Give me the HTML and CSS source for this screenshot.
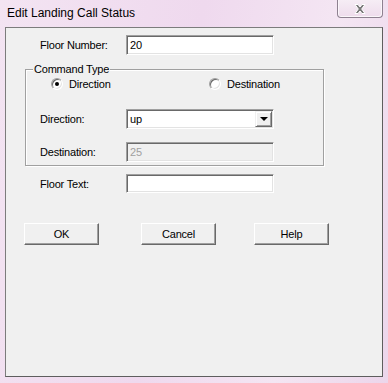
FILE: index.html
```html
<!DOCTYPE html>
<html lang="en">
<head>
  <meta charset="UTF-8">
  <title>Edit Landing Call Status</title>
  <link rel="stylesheet" href="styles.css">
</head>
<body>
<div class="window">
  <div class="titlebar">
    <span class="title">Edit Landing Call Status</span>
    <div class="close">
      <svg width="14" height="12" viewBox="0 0 14 12">
        <path d="M2 1.5 L5 1.5 L7 4 L9 1.5 L12 1.5 L8.7 6 L12 10.5 L9 10.5 L7 8 L5 10.5 L2 10.5 L5.3 6 Z" fill="#7a7a7a" stroke="#fff" stroke-width="1"/>
      </svg>
    </div>
  </div>
  <div class="client">
    <div class="row first">
      <label>Floor Number:</label>
      <div class="edit">20</div>
    </div>

    <div class="group">
      <span class="group-title">Command Type</span>
      <div class="radios">
        <span class="radio first-radio"><i class="dot checked"></i>Direction</span>
        <span class="radio"><i class="dot"></i>Destination</span>
      </div>
      <div class="row row-dir">
        <label>Direction:</label>
        <div class="edit combo">up<span class="drop"><i></i></span></div>
      </div>
      <div class="row row-dest">
        <label>Destination:</label>
        <div class="edit disabled">25</div>
      </div>
    </div>

    <div class="row row-text">
      <label>Floor Text:</label>
      <div class="edit short"></div>
    </div>

    <div class="buttons">
      <button class="btn btn-ok">OK</button>
      <button class="btn btn-cancel">Cancel</button>
      <button class="btn btn-help">Help</button>
    </div>
  </div>
</div>
</body>
</html>
```

FILE: styles.css
```css
* {
  padding: 0;
  margin: 0;
  box-sizing: border-box;
}

body {
  font-family: "Liberation Sans", Arial, sans-serif;
  font-size: 11px;
  color: #000;
}

.window {
  width: 388px;
  height: 383px;
  background: linear-gradient(100deg, #f3e4f2 0%, #efd9ee 45%, #f4e6f3 75%, #ecd6eb 100%);
}

.titlebar {
  height: 27px;
  display: flex;
  justify-content: space-between;
  align-items: flex-start;
}

.title {
  padding: 6px 0 0 7px;
  font-size: 12px;
  line-height: 15px;
  color: #000;
}

.close {
  width: 46px;
  height: 18px;
  margin-right: 5px;
  border: 1px solid #8e8190;
  border-top: 0;
  border-radius: 0 0 4px 4px;
  background: linear-gradient(#f6edf5, #eedcec);
  box-shadow: inset 1px 0 #fbf6fa, inset -1px -1px #fbf6fa;
  display: flex;
  align-items: center;
  justify-content: center;
}

.client {
  margin-left: 5px;
  width: 378px;
  height: 350px;
  background: #f0f0f0;
  border: 1px solid #7c7c7c;
  border-right-color: #5e5e5e;
  border-bottom-color: #5e5e5e;
}

.row {
  display: flex;
  align-items: center;
  padding-left: 34px;
}

.row label {
  width: 86px;
  letter-spacing: -0.2px;
}

.row.first {
  margin-top: 7px;
}

.edit {
  width: 148px;
  height: 20px;
  background: #fff;
  border: 1px solid;
  border-color: #a0a0a0 #fff #fff #a0a0a0;
  box-shadow: inset 1px 1px #696969, inset -1px -1px #e3e3e3;
  padding: 0 2px 0 3px;
  line-height: 18px;
}

.edit.short {
  height: 19px;
}

.edit.disabled {
  background: #f0f0f0;
  color: #a0a0a0;
}

.combo {
  display: flex;
  justify-content: space-between;
  padding-right: 1px;
}

.drop {
  width: 17px;
  height: 16px;
  margin-top: 1px;
  background: #f0f0f0;
  border: 1px solid;
  border-color: #f0f0f0 #696969 #696969 #f0f0f0;
  box-shadow: inset 1px 1px #fff, inset -1px -1px #a0a0a0;
  display: flex;
  align-items: center;
  justify-content: center;
}

.drop i {
  width: 0;
  height: 0;
  border-left: 4px solid transparent;
  border-right: 4px solid transparent;
  border-top: 4px solid #000;
}

.group {
  position: relative;
  margin: 14px 0 0 19px;
  width: 299px;
  padding-bottom: 3px;
  border: 1px solid #a0a0a0;
  box-shadow: inset 1px 1px #fff, 1px 1px #fff;
}

.group-title {
  position: absolute;
  top: -7px;
  left: 7px;
  padding: 0 1px;
  line-height: 13px;
  background: #f0f0f0;
  letter-spacing: -0.2px;
}

.radios {
  display: flex;
  align-items: center;
  height: 14px;
  margin-top: 7px;
  padding-left: 25px;
}

.radio {
  display: flex;
  align-items: center;
  letter-spacing: -0.2px;
}

.first-radio {
  width: 158px;
}

.dot {
  width: 12px;
  height: 12px;
  margin-right: 6px;
  border-radius: 50%;
  background: #fff;
  border: 1px solid;
  border-color: #a0a0a0 #fff #fff #a0a0a0;
  box-shadow: inset 1px 1px #696969, inset -1px -1px #e3e3e3;
  display: flex;
  align-items: center;
  justify-content: center;
}

.dot.checked::after {
  content: "";
  width: 4px;
  height: 4px;
  border-radius: 50%;
  background: #000;
}

.group .row {
  padding-left: 14px;
}

.row-dir {
  margin-top: 18px;
}

.row-dest {
  margin-top: 13px;
}

.row-text {
  margin-top: 8px;
}

.buttons {
  display: flex;
  margin-top: 30px;
  padding-left: 18px;
}

.btn {
  width: 75px;
  height: 22px;
  font-family: "Liberation Sans", Arial, sans-serif;
  font-size: 11px;
  letter-spacing: -0.2px;
  color: #000;
  background: #f0f0f0;
  border: 1px solid;
  border-color: #fff #696969 #696969 #fff;
  box-shadow: inset -1px -1px #a0a0a0, inset 1px 1px #f0f0f0;
}

.btn-cancel {
  margin-left: 42px;
}

.btn-help {
  margin-left: 38px;
}
```
